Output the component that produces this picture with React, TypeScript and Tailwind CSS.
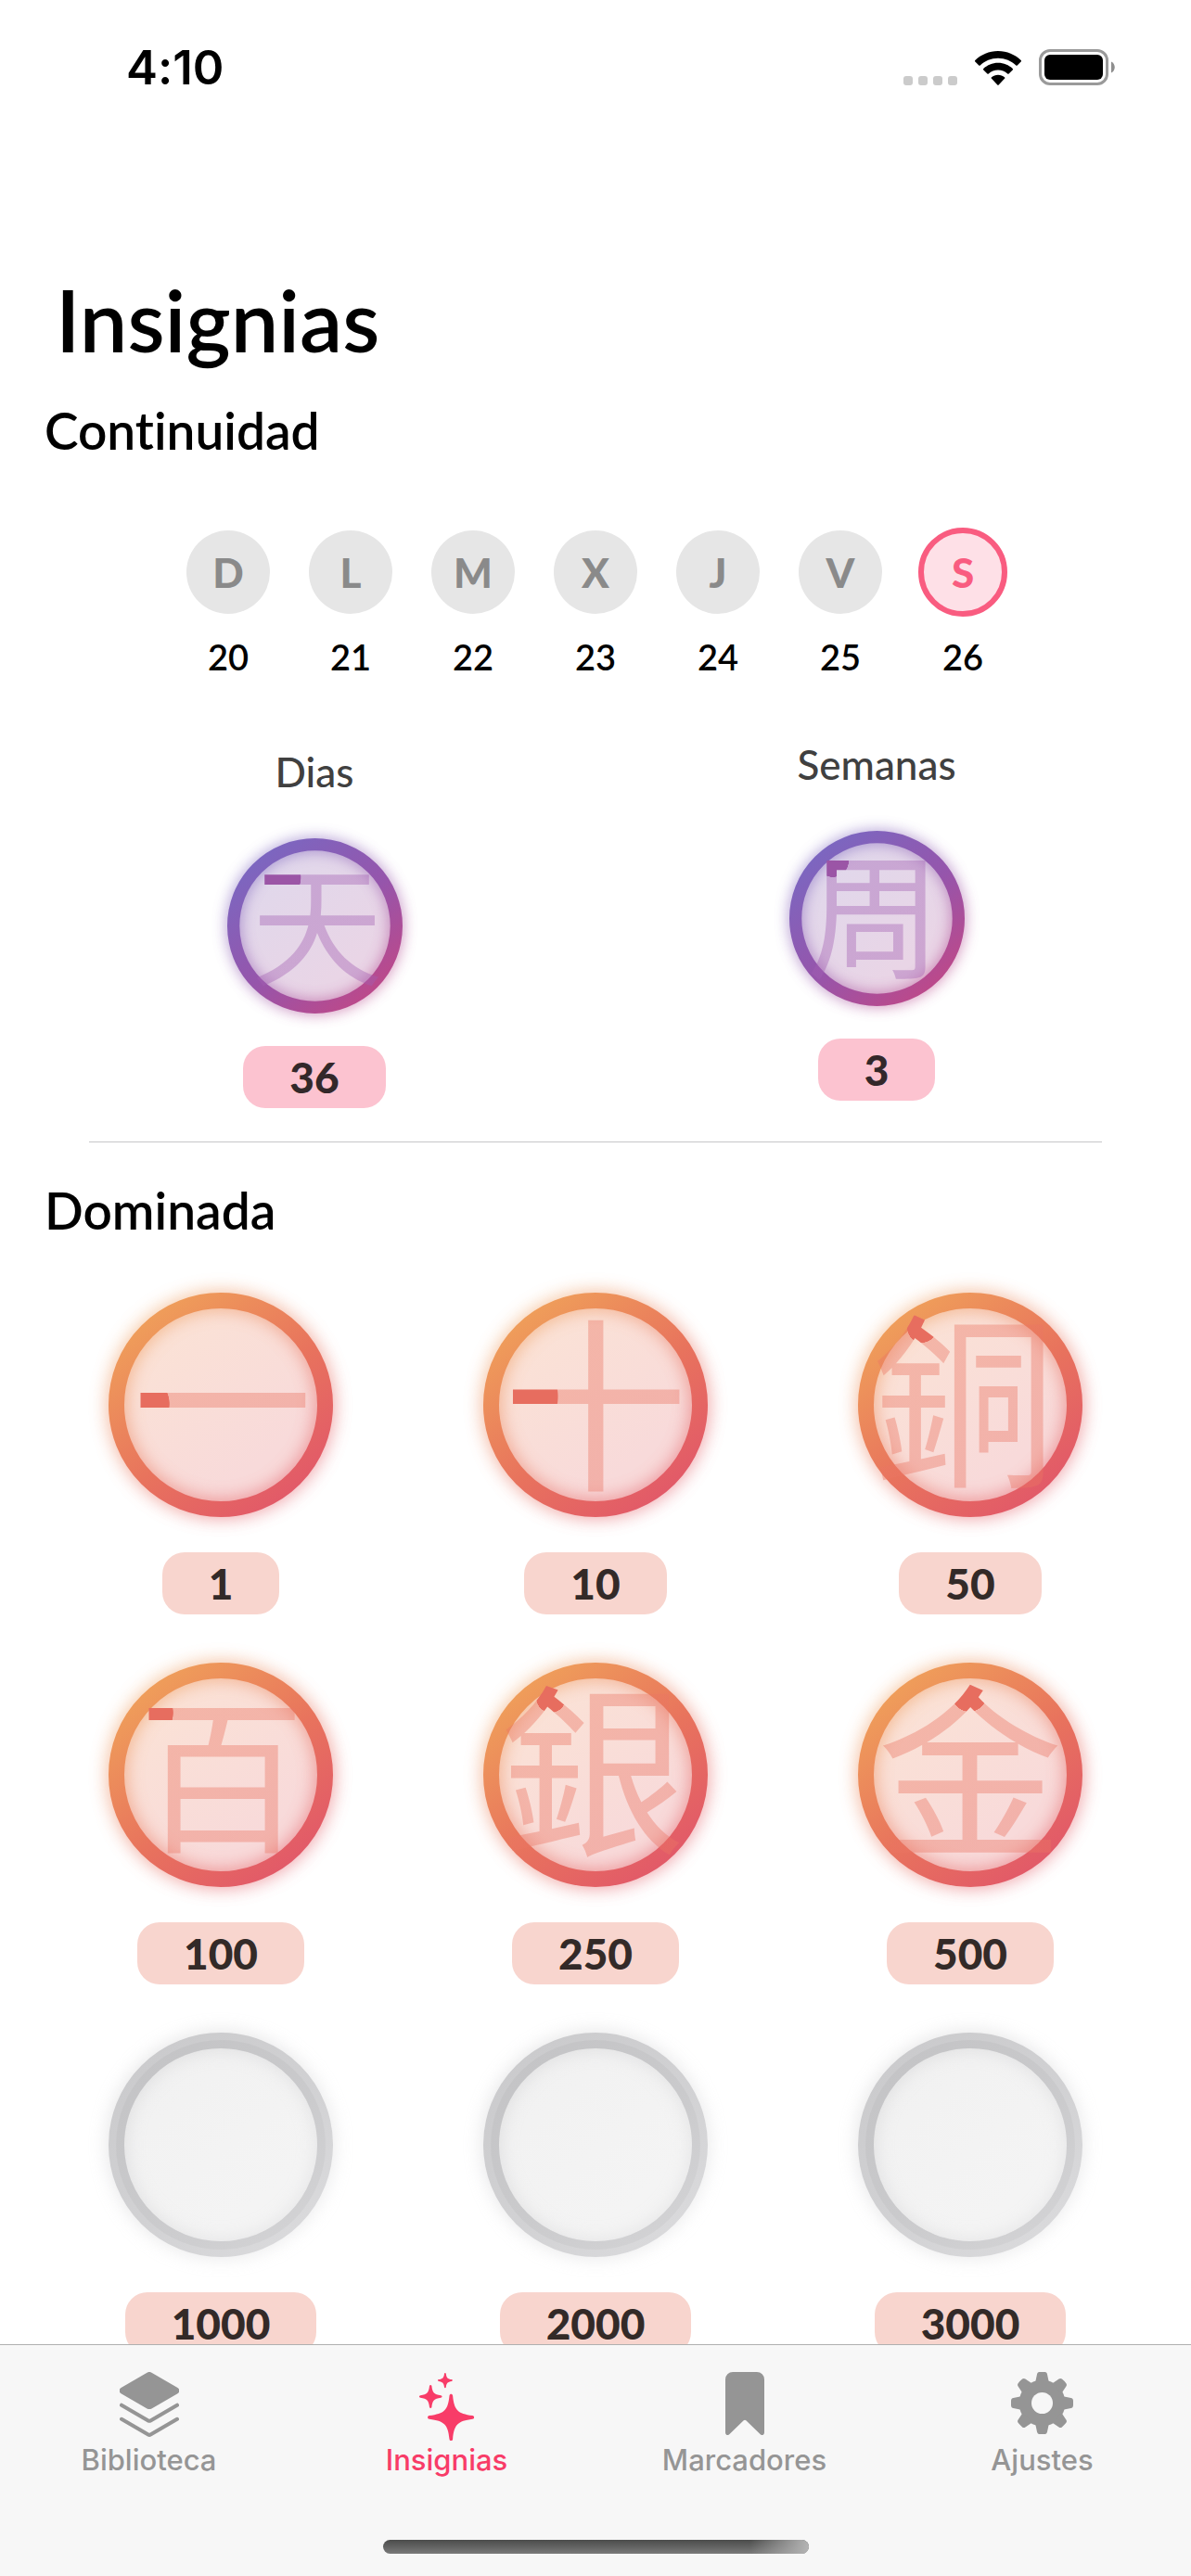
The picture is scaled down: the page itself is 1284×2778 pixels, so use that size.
import React, { useId } from "react";

type Tone = "purple" | "orange" | "empty";

type Glyph = {
  char: string;
  size: number;
  cx: number;
  cy: number;
  tip: [number, number, number];
};

const week = [
  { letter: "D", day: 20 },
  { letter: "L", day: 21 },
  { letter: "M", day: 22 },
  { letter: "X", day: 23 },
  { letter: "J", day: 24 },
  { letter: "V", day: 25 },
  { letter: "S", day: 26, today: true },
];

const streaks: { label: string; value: number; glyph: Glyph; offset: string }[] = [
  {
    label: "Dias",
    value: 36,
    offset: "pt-2",
    glyph: { char: "天", size: 182, cx: 124, cy: 120, tip: [66, 54, 36] },
  },
  {
    label: "Semanas",
    value: 3,
    offset: "pt-0",
    glyph: { char: "周", size: 186, cx: 117, cy: 119, tip: [60, 42, 22] },
  },
];

const mastered: { value: number; glyph?: Glyph }[] = [
  { value: 1, glyph: { char: "一", size: 194, cx: 123, cy: 118, tip: [34, 120, 32] } },
  { value: 10, glyph: { char: "十", size: 200, cx: 121, cy: 122, tip: [33, 112, 48] } },
  { value: 50, glyph: { char: "銅", size: 198, cx: 114, cy: 117, tip: [69, 38, 16] } },
  { value: 100, glyph: { char: "百", size: 180, cx: 122, cy: 122, tip: [40, 54, 30] } },
  { value: 250, glyph: { char: "銀", size: 200, cx: 118, cy: 117, tip: [73, 38, 16] } },
  { value: 500, glyph: { char: "金", size: 200, cx: 121, cy: 118, tip: [120, 34, 19] } },
  { value: 1000 },
  { value: 2000 },
  { value: 3000 },
];

const palette = {
  purple: {
    ring: ["#7c66c0", "#9655ab", "#bb498b"],
    fill: ["#dfd8ec", "#e9d5e6"],
    glow: 0.7,
    tip: "#9b55a6",
    faint: "#a25fb2",
  },
  orange: {
    ring: ["#ef9d5a", "#e8735d", "#e25a68"],
    fill: ["#fbe3d5", "#f8dada"],
    glow: 0.7,
    tip: "#e76d5f",
    faint: "#ea7563",
  },
  empty: {
    ring: ["#cbcbcd", "#d1d1d3", "#d9d9db"],
    fill: ["#f1f1f1", "#f4f4f4"],
    glow: 0.6,
    tip: "#000000",
    faint: "#000000",
  },
};

function Badge({ tone, glyph, className }: { tone: Tone; glyph?: Glyph; className: string }) {
  const id = useId().replace(/[^a-zA-Z0-9]/g, "");
  const p = palette[tone];
  return (
    <svg viewBox="0 0 242 242" className={`overflow-visible ${className}`}>
      <defs>
        <linearGradient id={`ring${id}`} gradientUnits="userSpaceOnUse" x1="40" y1="30" x2="190" y2="220">
          <stop offset="0" stopColor={p.ring[0]} />
          <stop offset="0.55" stopColor={p.ring[1]} />
          <stop offset="1" stopColor={p.ring[2]} />
        </linearGradient>
        <linearGradient id={`fill${id}`} x1="0" y1="0" x2="0.8" y2="1">
          <stop offset="0.1" stopColor={p.fill[0]} />
          <stop offset="0.8" stopColor={p.fill[1]} />
        </linearGradient>
        <filter id={`glow${id}`} x="-25%" y="-25%" width="150%" height="150%">
          <feGaussianBlur stdDeviation="10" />
        </filter>
        {glyph && (
          <radialGradient
            id={`ink${id}`}
            gradientUnits="userSpaceOnUse"
            cx={glyph.tip[0]}
            cy={glyph.tip[1]}
            r={glyph.tip[2]}
          >
            <stop offset="0.98" stopColor={p.tip} />
            <stop offset="1" stopColor={p.faint} stopOpacity="0.4" />
          </radialGradient>
        )}
      </defs>
      <circle cx="121" cy="121" r="112.5" fill={`url(#fill${id})`} />
      <circle
        cx="121"
        cy="121"
        r="112.5"
        fill="none"
        stroke={`url(#ring${id})`}
        strokeWidth="17"
        opacity={p.glow}
        filter={`url(#glow${id})`}
      />
      <circle cx="121" cy="121" r="112.5" fill="none" stroke={`url(#ring${id})`} strokeWidth="17" />
      {tone === "empty" && (
        <circle cx="121" cy="121" r="108.5" fill="none" stroke="#000000" strokeOpacity="0.03" strokeWidth="9" />
      )}
      {glyph && (
        <text
          x={glyph.cx}
          y={glyph.cy + glyph.size * 0.38}
          fontSize={glyph.size}
          textAnchor="middle"
          fill={`url(#ink${id})`}
          className="font-['Noto_Sans_CJK_TC','Noto_Sans_CJK_JP',sans-serif] font-normal"
        >
          {glyph.char}
        </text>
      )}
    </svg>
  );
}

function Pill({ value, className }: { value: number; className: string }) {
  return (
    <span className={`rounded-3xl px-[50px] text-[46px] leading-[67px] font-black ${className}`}>{value}</span>
  );
}

function StatusBar() {
  return (
    <div className="flex h-[145px] shrink-0 items-center justify-between pr-[82px] pl-[136px] font-['Inter',sans-serif]">
      <span className="text-[51px] leading-[60px] font-semibold">4:10</span>
      <div className="flex items-end gap-[19px]">
        <div className="flex gap-1.5">
          {[0, 1, 2, 3].map((n) => (
            <span key={n} className="size-2.5 rounded-[3px] bg-[#cbcbcb]" />
          ))}
        </div>
        <svg viewBox="0 0 50 37" className="h-[37px] w-[50px]">
          <path d="M25 0C15.400 0 6.700 3.800.3 10.100a1 1 0 0 0 0 1.400l4 4a1 1 0 0 0 1.400 0C10.700 10.700 17.500 7.800 25 7.800s14.300 2.900 19.300 7.700a1 1 0 0 0 1.400 0l4-4a1 1 0 0 0 0-1.400C43.300 3.800 34.600 0 25 0Z" />
          <path d="M25 12.800c-6.100 0-11.600 2.400-15.700 6.200a1 1 0 0 0 0 1.500l4.100 4a1 1 0 0 0 1.400 0c2.700-2.400 6.300-3.900 10.200-3.900s7.500 1.500 10.200 3.900a1 1 0 0 0 1.400 0l4.100-4a1 1 0 0 0 0-1.500c-4.100-3.800-9.600-6.200-15.700-6.200Z" />
          <path d="M25 25.700c-2.700 0-5.100 1-7 2.600a1 1 0 0 0 0 1.500l6.300 6.800a1 1 0 0 0 1.400 0l6.300-6.800a1 1 0 0 0 0-1.500c-1.900-1.600-4.300-2.600-7-2.600Z" />
        </svg>
        <svg viewBox="0 0 82 39" className="h-[39px] w-[82px]">
          <rect x="1.500" y="1.500" width="72" height="36" rx="10.500" fill="none" stroke="#9a9a9a" strokeWidth="3" />
          <rect x="6" y="6" width="63" height="27" rx="6" />
          <path d="M78 13.500c5 2 5 10 0 12Z" fill="#8e8e8e" />
        </svg>
      </div>
    </div>
  );
}

function LayersIcon() {
  return (
    <svg viewBox="0 0 64 72" className="h-[72px] w-16" fill="none" stroke="currentColor" aria-hidden="true">
      <path
        d="M29.500.700a5 5 0 0 1 5 0L62.500 17a3.500 3.500 0 0 1 0 6.200L34.500 39.400a5 5 0 0 1-5 0L1.500 23.200a3.500 3.500 0 0 1 0-6.200Z"
        fill="currentColor"
        stroke="none"
      />
      <path d="M2 35.700 30.800 52.400a2.500 2.500 0 0 0 2.500 0L62 35.700M2 50.800 30.800 67.500a2.500 2.500 0 0 0 2.500 0L62 50.800" strokeWidth="4" strokeLinecap="round" />
    </svg>
  );
}

function SparklesIcon() {
  return (
    <svg viewBox="0 0 60 74" className="h-[74px] w-[60px]" fill="currentColor" aria-hidden="true">
      <path d="M32.500 25.500c.4-2.300 3.200-2.300 3.600 0 1.500 15.500 5.200 19.400 21.300 21.600 2.300.4 2.300 3.400 0 3.700-16.100 2.200-19.800 6-21.300 21.700-.4 2.300-3.200 2.300-3.600 0-1.500-15.700-5.200-19.500-21.700-21.700-2.300-.3-2.300-3.300 0-3.700 16.500-2.200 20.200-6.100 21.700-21.600Z" />
      <path d="M11 15.100c.3-1.400 2.100-1.400 2.400 0 .8 7.300 2.600 9.200 9.900 10.200 1.600.3 1.600 2.200 0 2.500-7.300 1-9.100 2.900-9.900 10.200-.3 1.400-2.100 1.400-2.400 0-.8-7.300-2.600-9.200-9.800-10.200-1.600-.3-1.600-2.200 0-2.500 7.200-1 9-2.900 9.800-10.200Z" />
      <path d="M27 1.700c.2-1 1.600-1 1.800 0 .4 4.400 1.800 5.900 6.200 6.400 1 .2 1 1.600 0 1.800-4.400.6-5.800 2.100-6.200 6.500-.2 1-1.600 1-1.800 0-.4-4.400-1.800-5.900-6.200-6.500-1-.2-1-1.600 0-1.800 4.400-.5 5.800-2 6.200-6.400Z" />
    </svg>
  );
}

function BookmarkIcon() {
  return (
    <svg viewBox="0 0 42 68" className="h-[68px] w-[42px]" fill="currentColor" aria-hidden="true">
      <path d="M8 0h26a8 8 0 0 1 8 8v57c0 3-2.500 4-4.500 2L22.300 52.300a2 2 0 0 0-2.600 0L4.500 67c-2 2-4.500 1-4.500-2V8a8 8 0 0 1 8-8Z" />
    </svg>
  );
}

function GearIcon() {
  return (
    <svg viewBox="0 0 67 67" className="size-[67px]" fill="currentColor" aria-hidden="true">
      <mask id="gear-hole">
        <rect width="67" height="67" fill="white" />
        <circle cx="33.500" cy="33.500" r="11.500" fill="black" />
      </mask>
      <g mask="url(#gear-hole)">
        <circle cx="33.500" cy="33.500" r="25" />
        {[0, 45, 90, 135, 180, 225, 270, 315].map((a) => (
          <path
            key={a}
            d="M28.800.800a3 3 0 0 1 1.500-.700 30 30 0 0 1 6.400 0 3 3 0 0 1 1.500.700 3 3 0 0 1 .8 1.600L40.800 11H26.200L28 2.400a3 3 0 0 1 .8-1.600Z"
            transform={`rotate(${a} 33.500 33.500)`}
          />
        ))}
      </g>
    </svg>
  );
}

const tabs = [
  { label: "Biblioteca", Icon: LayersIcon },
  { label: "Insignias", Icon: SparklesIcon, active: true },
  { label: "Marcadores", Icon: BookmarkIcon },
  { label: "Ajustes", Icon: GearIcon },
];

function TabBar() {
  return (
    <nav className="shrink-0 border-t border-[#b0b0b0] bg-[#f7f7f7] pt-[29px] pb-6 font-['Inter',sans-serif]">
      <div className="grid grid-cols-4">
        {tabs.map(({ label, Icon, active }) => (
          <a
            key={label}
            href={`#${label.toLowerCase()}`}
            aria-current={active ? "page" : undefined}
            className={`flex flex-col items-center gap-1 text-[31px] leading-[38px] font-medium ${
              active ? "text-[#f83c68]" : "text-[#959595]"
            }`}
          >
            <span className="flex h-[72px] items-start">
              <Icon />
            </span>
            {label}
          </a>
        ))}
      </div>
      <div className="mx-auto mt-[67px] h-[15px] w-[459px] rounded-full bg-linear-to-b from-[#4b4c4b] to-[#7a7a7a]">
        <div className="ml-auto h-full w-16 rounded-r-full bg-linear-to-r from-transparent to-[#b4b4b4]" />
      </div>
    </nav>
  );
}

export default function App() {
  return (
    <div className="flex h-screen flex-col bg-white font-['Lato',sans-serif] text-black [font-variant-ligatures:none]">
      <StatusBar />
      <main className="min-h-0 flex-1 overflow-hidden pt-[146px]">
        <h1 className="px-[60px] text-[92px] leading-[108px] font-semibold">Insignias</h1>

        <section>
          <h2 className="mt-8 px-12 text-[55px] leading-[66px] font-semibold">Continuidad</h2>
          <ol className="mt-[72px] flex justify-center gap-9">
            {week.map(({ letter, day, today }) => (
              <li key={letter} className="flex w-24 flex-col items-center gap-5">
                <span className="flex size-24 items-center justify-center">
                  <span
                    className={`flex items-center justify-center rounded-full text-[44px] leading-none font-black ${
                      today
                        ? "size-24 border-6 border-[#f95c80] bg-[#fee0e7] text-[#f95c80]"
                        : "size-[90px] bg-[#e6e6e6] text-[#8a8a8a]"
                    }`}
                  >
                    {letter}
                  </span>
                </span>
                <span className="text-[38px] leading-[46px] font-semibold">{day}</span>
              </li>
            ))}
          </ol>

          <div className="mt-[66px] grid grid-cols-2 px-9">
            {streaks.map(({ label, value, glyph, offset }) => (
              <figure key={label} className={`flex flex-col items-center ${offset}`}>
                <figcaption className="text-[44px] leading-[54px] font-medium text-[#404040]">{label}</figcaption>
                <Badge tone="purple" glyph={glyph} className="mt-[45px] size-[189px]" />
                <Pill value={value} className="mt-[35px] bg-[#fcc3d0] text-[#33282a]" />
              </figure>
            ))}
          </div>
          <hr className="mx-24 mt-9 border-t border-[#c6c6c8]" />
        </section>

        <section>
          <h2 className="mt-10 px-12 text-[55px] leading-[66px] font-semibold">Dominada</h2>
          <div className="mt-14 grid grid-cols-3 gap-y-[52px] px-9">
            {mastered.map(({ value, glyph }) => (
              <figure key={value} className="flex flex-col items-center">
                <Badge tone={glyph ? "orange" : "empty"} glyph={glyph} className="size-[242px]" />
                <Pill value={value} className="mt-[38px] bg-[#f8d5ce] text-[#332a28]" />
              </figure>
            ))}
          </div>
        </section>
      </main>
      <TabBar />
    </div>
  );
}
